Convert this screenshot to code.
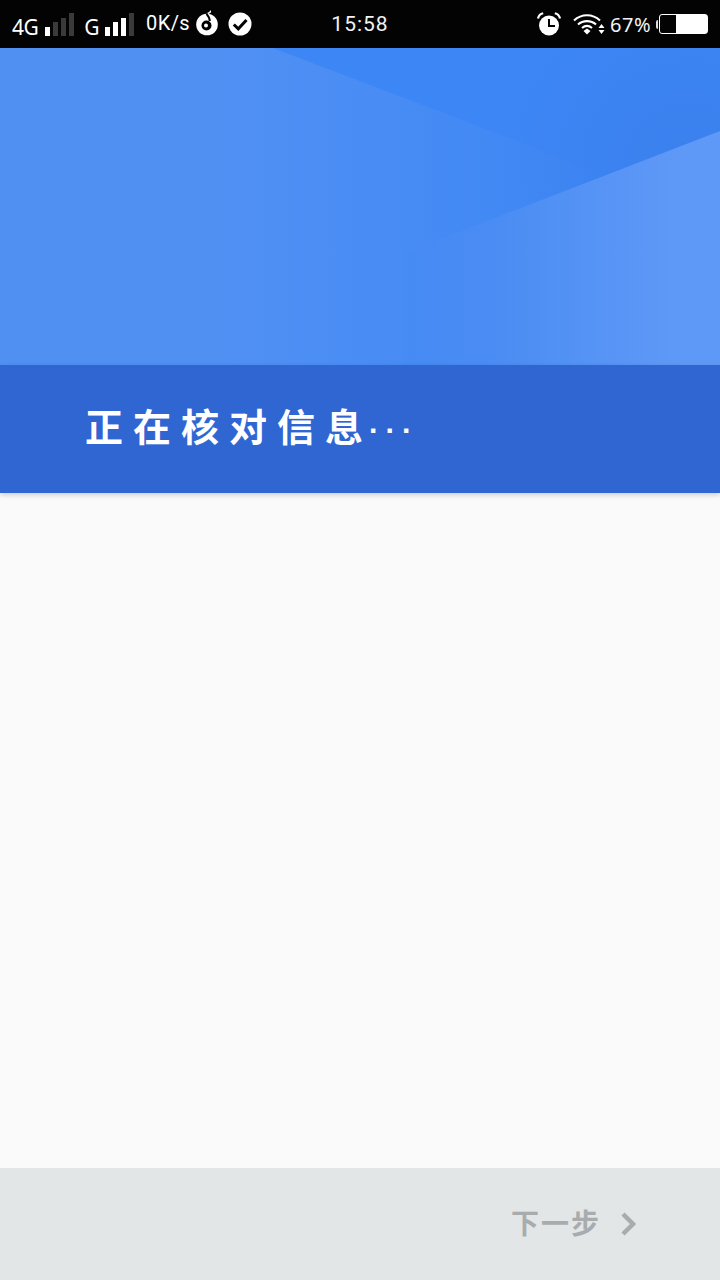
<div class="screen">
  <header class="status">
    <div class="left">
      <span class="net">4G</span>
      <span class="bars" aria-hidden="true">
        <i class="on b1"></i><i class="b2"></i><i class="b3"></i><i class="b4"></i>
      </span>
      <span class="net g">G</span>
      <span class="bars second" aria-hidden="true">
        <i class="on b1"></i><i class="on b2"></i><i class="on b3"></i><i class="b4"></i>
      </span>
      <span class="speed">0K/s</span>
      <svg class="ic drop" viewBox="0 0 22 26" width="22" height="26" aria-hidden="true">
        <path d="M11.500 3.500C14 3 15 1.800 14 .8" fill="none" stroke="#fff" stroke-width="1.500"/>
        <circle cx="11" cy="14.500" r="10.800" fill="#fff"/>
        <path d="M10.500 3.800C12.800 6.500 13.800 8.500 13.800 11" fill="none" stroke="#000" stroke-width="2"/>
        <circle cx="10.500" cy="15.500" r="5" fill="#000"/>
        <circle cx="10" cy="15.500" r="2" fill="#fff"/>
      </svg>
      <svg class="ic check" viewBox="0 0 24 24" width="24" height="24" aria-hidden="true">
        <circle cx="12" cy="12" r="11.500" fill="#fff"/>
        <path d="M5.800 12.500l4.500 4.300L18.500 8" fill="none" stroke="#000" stroke-width="3"/>
      </svg>
    </div>
    <div class="clock">15:58</div>
    <div class="right">
      <svg class="ic alarm" viewBox="0 0 26 26" width="26" height="26" aria-hidden="true">
        <circle cx="13" cy="14.500" r="10" fill="#fff"/>
        <path d="M2 7.500C2.600 4.500 4.600 2.800 7.200 2.200M24 7.500C23.400 4.500 21.400 2.800 18.800 2.200" fill="none" stroke="#fff" stroke-width="2.200"/>
        <path d="M13 8v7h6" fill="none" stroke="#000" stroke-width="2"/>
      </svg>
      <svg class="ic wifi" viewBox="0 0 32 24" width="32" height="24" aria-hidden="true">
        <path d="M1 8.500C8.500 1.500 19.500 1.500 27 8.500M5 12.500C10 8 18 8 23 12.500M9 16c3-2.500 7-2.500 10 0" fill="none" stroke="#fff" stroke-width="2.100"/>
        <path d="M10.500 19l3.500-2.500 3.500 2.500-3.500 3.500z" fill="#fff"/>
        <path d="M25.500 16l3-4 3 4zM25.500 18l3 4 3-4z" fill="#fff"/>
      </svg>
      <span class="pct">67%</span>
      <span class="batt-nub"></span>
      <span class="batt"><i></i></span>
    </div>
  </header>

  <section class="hero">
    <svg class="shapes" viewBox="0 0 720 317" preserveAspectRatio="none" aria-hidden="true">
      <defs>
        <linearGradient id="base" gradientUnits="userSpaceOnUse" x1="0" y1="0" x2="720" y2="0">
          <stop offset="0" stop-color="#5090f3"/>
          <stop offset="0.32" stop-color="#5090f3"/>
          <stop offset="0.84" stop-color="#3d86f5"/>
          <stop offset="1" stop-color="#3d86f5"/>
        </linearGradient>
        <linearGradient id="low" gradientUnits="userSpaceOnUse" x1="407" y1="0" x2="680" y2="0">
          <stop offset="0" stop-color="#468af3"/>
          <stop offset="0.3" stop-color="#4a8cf3"/>
          <stop offset="1" stop-color="#5f99f7"/>
        </linearGradient>
        <radialGradient id="shade" gradientUnits="userSpaceOnUse" cx="690" cy="120" r="190">
          <stop offset="0" stop-color="#3474dc" stop-opacity="0.3"/>
          <stop offset="1" stop-color="#3474dc" stop-opacity="0"/>
        </radialGradient>
      </defs>
      <rect width="720" height="317" fill="url(#base)"/>
      <polygon points="273,0 720,0 720,83 607,127" fill="#3d86f5"/>
      <rect x="400" width="320" height="317" fill="url(#shade)"/>
      <polygon points="407,317 407,204 720,83 720,317" fill="url(#low)"/>
    </svg>
  </section>

  <section class="banner">
    <h1>正在核对信息<span class="dots">···</span></h1>
  </section>

  <main class="body"></main>

  <footer class="foot">
    <div class="next">
      <span>下一步</span>
      <svg viewBox="0 0 18 26" width="18" height="26" aria-hidden="true">
        <path d="M3 3l10 10L3 23" fill="none" stroke="#a8acae" stroke-width="4.500"/>
      </svg>
    </div>
  </footer>
</div>

<style>
  :global(body) { margin: 0; }
  .screen {
    width: 720px; height: 1280px; display: flex; flex-direction: column;
    background: #fafafa; overflow: hidden;
    font-family: "Noto Sans", "Noto Sans CJK SC", sans-serif;
  }
  .status {
    height: 48px; flex: none; background: #030303; color: #fff;
    display: grid; grid-template-columns: 1fr auto 1fr; align-items: center;
  }
  .left { display: flex; align-items: center; padding-left: 12px; }
  .net { font-size: 21px; line-height: 24px; margin-top: 6px; letter-spacing: -0.5px; }
  .net.g { margin-left: 10px; }
  .bars { display: flex; align-items: flex-end; gap: 3px; height: 24px; margin-left: 7px; margin-top: -1px; }
  .bars.second { margin-left: 6px; }
  .bars i { display: block; width: 5px; background: #3a3a3a; }
  .bars i.on { background: #fff; }
  .b1 { height: 9px; } .b2 { height: 14px; } .b3 { height: 18px; } .b4 { height: 23px; }
  .speed { font-size: 20px; line-height: 24px; margin-left: 12px; margin-top: -2px; letter-spacing: 0.4px; font-family: Roboto, sans-serif; }
  .ic { display: block; flex: none; }
  .drop { margin-left: 6px; margin-top: -2px; }
  .check { margin-left: 10px; }
  .clock { font-size: 21px; letter-spacing: 1px; color: #f2f2f2; font-family: Roboto, sans-serif; }
  .right { display: flex; align-items: center; justify-content: flex-end; padding-right: 12px; }
  .alarm { margin-right: 11px; }
  .wifi { margin-right: 5px; }
  .pct { font-size: 20px; color: #f2f2f2; letter-spacing: 0.5px; }
  .batt-nub { width: 2px; height: 9px; background: #ddd; margin-left: 5px; margin-right: 1px; border-radius: 2px 0 0 2px; }
  .batt {
    width: 47px; height: 18px; border: 1px solid #fff; border-radius: 3px;
    display: flex; justify-content: flex-end; box-sizing: content-box;
  }
  .batt i { display: block; width: 31px; background: #fff; }
  .hero { height: 317px; flex: none; }
  .shapes { display: block; width: 100%; height: 100%; }
  .banner {
    height: 128px; flex: none; background: #2f66d2; display: flex; align-items: center;
    padding: 0 0 2px 85px; box-sizing: border-box;
    box-shadow: 0 2px 5px rgba(0, 0, 0, 0.18); position: relative;
  }
  h1 {
    margin: 0; color: #fff; font-size: 38px; font-weight: 700; letter-spacing: 10px;
    font-family: "Noto Sans CJK SC", sans-serif; line-height: 44px; white-space: nowrap;
  }
  .dots { font-family: "Liberation Sans", sans-serif; font-size: 30px; font-weight: 700; letter-spacing: 6.500px; margin-left: -4px; }
  .body { flex: 1; }
  .foot {
    height: 112px; flex: none; background: #e2e6e7; display: flex; align-items: center;
    justify-content: flex-end; padding: 0 82px 4px 0; box-sizing: border-box;
  }
  .next { display: flex; align-items: center; gap: 19px; color: #a8acae; font-size: 28px; font-weight: 700; letter-spacing: 2px; font-family: "Noto Sans CJK SC", sans-serif; }
  .next svg { display: block; margin-top: 4px; }
</style>
